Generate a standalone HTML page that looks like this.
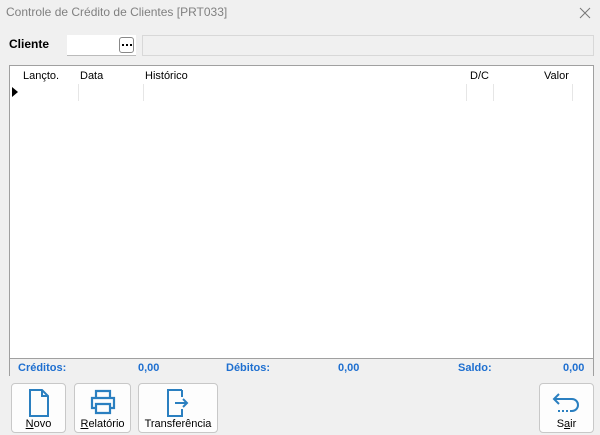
<!DOCTYPE html>
<html><head><meta charset="utf-8"><style>
*{margin:0;padding:0;box-sizing:border-box}
body{width:600px;height:435px;background:#f0f0f0;font-family:"Liberation Sans",sans-serif;font-size:11px;color:#000;position:relative;overflow:hidden}
.a{position:absolute}
.title{left:6px;top:5px;color:#808080;font-size:12px}
.grid{left:9px;top:65px;width:585px;height:311px;border:1px solid #a0a0a0;background:#fff}
.sep{position:absolute;top:18px;height:17px;border-left:1px solid #e6e6e6}
.tot{position:absolute;left:0;right:0;top:292px;height:18px;background:#f0f0f0;border-top:1px solid #a0a0a0;color:#1e6fd0;font-weight:bold}
.tot span{position:absolute;top:3px}
.btn{position:absolute;top:383px;height:50px;border:1px solid #c8c8c8;border-radius:4px;background:#fdfdfd;text-align:center}
.btn .l{position:absolute;bottom:2px;left:0;right:0;font-size:11px}
.btn svg{position:absolute;top:5px;left:50%;transform:translateX(-50%)}
</style></head><body>
<div class="a title">Controle de Crédito de Clientes [PRT033]</div>
<svg class="a" style="left:579px;top:7px" width="12" height="12"><path d="M1 1L11 11M11 1L1 11" stroke="#777" stroke-width="1"/></svg>
<div class="a" style="left:9px;top:37px;font-weight:bold;font-size:12px">Cliente</div>
<div class="a" style="left:67px;top:35px;width:69px;height:21px;background:#fff;border-bottom:1px solid #bbb"></div>
<div class="a" style="left:119px;top:37px;width:15px;height:16px;border:1px solid #888;border-radius:3px;background:#fff"><svg class="a" style="left:2px;top:6px" width="10" height="3"><rect x="0" y="0" width="2" height="2" fill="#000"/><rect x="4" y="0" width="2" height="2" fill="#000"/><rect x="8" y="0" width="2" height="2" fill="#000"/></svg></div>
<div class="a" style="left:142px;top:35px;width:452px;height:21px;border:1px solid #d8d8d8;background:#f0f0f0"></div>
<div class="a grid">
<div class="a" style="left:13px;top:4px">Lançto.</div>
<div class="a" style="left:70px;top:4px">Data</div>
<div class="a" style="left:135px;top:4px">Histórico</div>
<div class="a" style="left:460px;top:4px">D/C</div>
<div class="a" style="left:534px;top:4px">Valor</div>
<svg class="a" style="left:2px;top:21px" width="6" height="10"><path d="M0 0L6 5L0 10Z" fill="#000"/></svg>
<div class="sep" style="left:68px"></div><div class="sep" style="left:133px"></div><div class="sep" style="left:456px"></div><div class="sep" style="left:483px"></div><div class="sep" style="left:562px"></div>
<div class="tot"><span style="left:8px">Créditos:</span><span style="left:128px">0,00</span><span style="left:216px">Débitos:</span><span style="left:328px">0,00</span><span style="left:448px">Saldo:</span><span style="left:553px">0,00</span></div>
</div>
<div class="btn" style="left:11px;width:55px"><svg width="22" height="28"><path d="M2 1H14L20 7V27H2Z M14 1V7H20" fill="none" stroke="#2a7fc0" stroke-width="2"/></svg><div class="l"><u>N</u>ovo</div></div>
<div class="btn" style="left:74px;width:57px"><svg width="28" height="26"><path d="M7 8V2H21V8 M7 19H3V9H25V19H21 M7 15H21V24H7Z" fill="none" stroke="#2a7fc0" stroke-width="2.2"/></svg><div class="l"><u>R</u>elatório</div></div>
<div class="btn" style="left:138px;width:80px"><svg width="24" height="28"><path d="M16 1H2V27H16V20 M16 8V1 M9 14H21 M17 10L21 14L17 18" fill="none" stroke="#2a7fc0" stroke-width="2"/></svg><div class="l">Transferência</div></div>
<div class="btn" style="left:539px;width:55px"><svg width="30" height="28"><path d="M7 5L2 10L7 15 M2 10H20A5 5 0 0 1 20 22H18" fill="none" stroke="#2a7fc0" stroke-width="2"/><path d="M6 22h2M10 22h2M14 22h2" stroke="#2a7fc0" stroke-width="2"/></svg><div class="l">S<u>a</u>ir</div></div>
</body></html>
